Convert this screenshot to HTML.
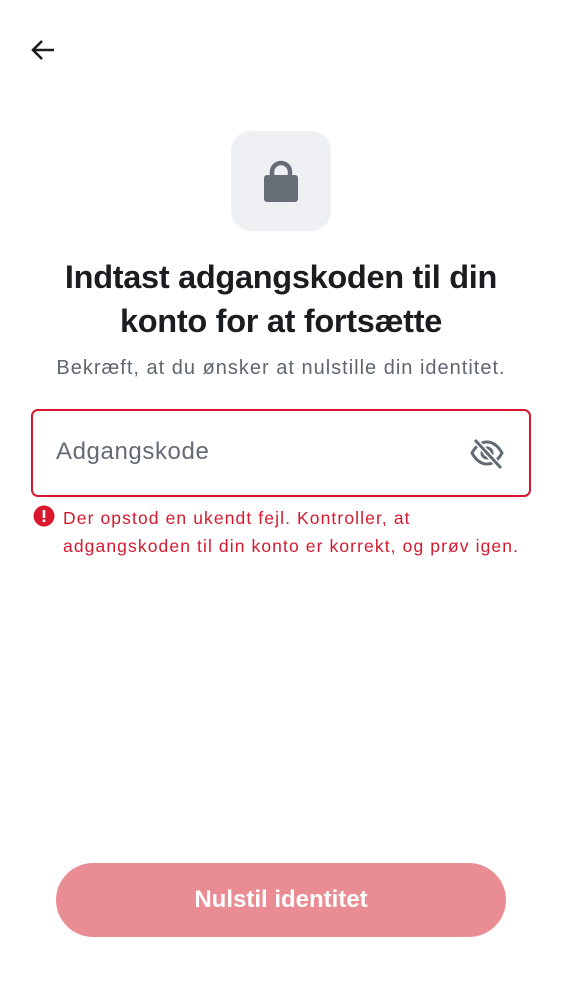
<!DOCTYPE html>
<html><head><meta charset="utf-8"><style>
body{margin:0;width:562px;height:1000px;background:#fff;font-family:"Liberation Sans",sans-serif;position:relative;overflow:hidden}
.abs{position:absolute}
h1{position:absolute;left:0;right:0;top:255px;margin:0;text-align:center;font-size:32.5px;line-height:44px;font-weight:bold;color:#1b1c20;letter-spacing:-0.3px}
.sub{top:357px;left:0;right:0;text-align:center;font-size:20px;color:#5f6670;letter-spacing:1px}
.inp{left:31px;top:409px;width:496px;height:84px;border:2px solid #d9182f;border-radius:7px}
.ph{left:56px;top:438px;font-size:24px;color:#646b75;letter-spacing:0.6px}
.err{left:63px;top:504px;font-size:17.5px;line-height:28px;color:#d31a30;letter-spacing:1.1px}
.btn{left:56px;top:863px;width:450px;height:74px;border-radius:37px;background:#ea8c93;color:#fff;font-weight:bold;font-size:24px;text-align:center;line-height:74px}
</style></head><body>
<svg class="abs" style="left:28px;top:36px" width="30" height="30" viewBox="0 0 30 30"><path d="M26 14H6M14 5L5 14l9 9" fill="none" stroke="#1b1c20" stroke-width="2.6"/></svg>
<div class="abs" style="left:231px;top:131px;width:100px;height:100px;border-radius:20px;background:#eff0f4"></div>
<svg class="abs" style="left:262px;top:158px" width="38" height="46" viewBox="0 0 38 46"><path d="M10 20v-6a9 9 0 0 1 18 0v6" fill="none" stroke="#676d77" stroke-width="4.5"/><rect x="2" y="17" width="34" height="27" rx="3" fill="#676d77"/></svg>
<h1>Indtast adgangskoden til din<br>konto for at fortsætte</h1>
<div class="abs sub">Bekræft, at du ønsker at nulstille din identitet.</div>
<div class="abs inp"></div>
<div class="abs ph">Adgangskode</div>
<svg class="abs" style="left:469px;top:436px" width="36" height="34" viewBox="0 0 36 34"><path d="M3 17C8 8 14 6 18 6s10 2 15 11c-5 9-11 11-15 11S8 26 3 17z" fill="none" stroke="#646b75" stroke-width="3"/><circle cx="18" cy="17" r="5" fill="none" stroke="#646b75" stroke-width="3"/><path d="M6 4l26 28" stroke="#fff" stroke-width="6"/><path d="M6 4l26 28" stroke="#646b75" stroke-width="3"/></svg>
<svg class="abs" style="left:33px;top:505px" width="22" height="22" viewBox="0 0 22 22"><circle cx="11" cy="11" r="10.5" fill="#d9182f"/><rect x="9.7" y="5" width="2.6" height="8" fill="#fff"/><rect x="9.7" y="14.5" width="2.6" height="2.6" fill="#fff"/></svg>
<div class="abs err">Der opstod en ukendt fejl. Kontroller, at<br>adgangskoden til din konto er korrekt, og prøv igen.</div>
<div class="abs btn">Nulstil identitet</div>
</body></html>
